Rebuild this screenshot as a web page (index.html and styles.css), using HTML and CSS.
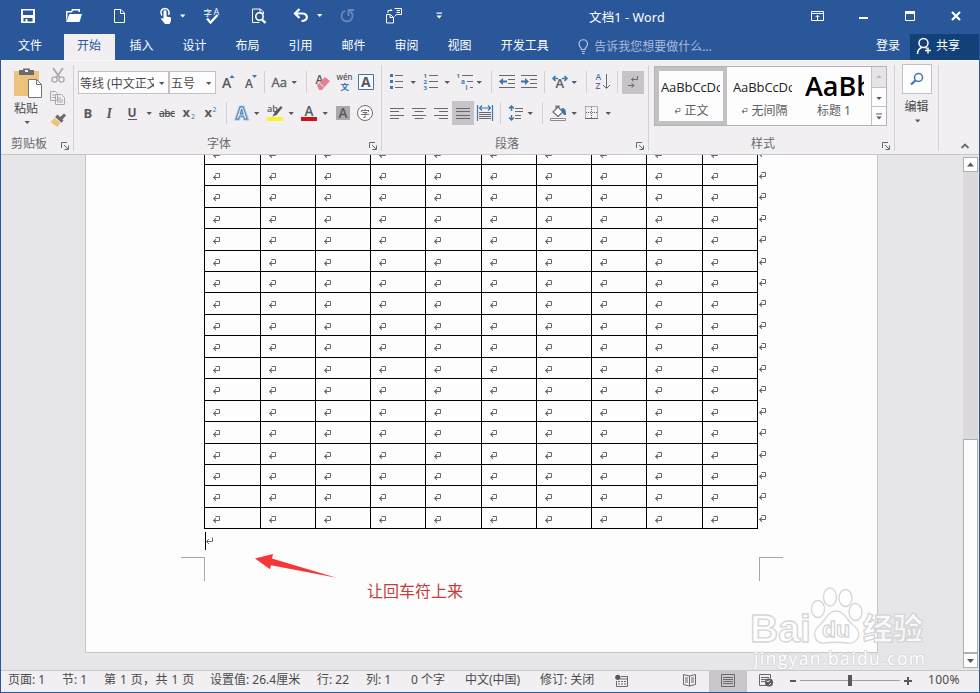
FILE: index.html
```html
<!DOCTYPE html>
<html lang="zh-CN">
<head>
    <meta charset="UTF-8">
    <title>文档1 - Word</title>
    <link rel="stylesheet" href="styles.css">
</head>
<body>
<svg class="defs">
    <defs>
        <path id="caret" d="M0 0h5.4l-2.7 3z"/>
        <path id="mark" d="M3.5 .5H7.500v4H1.5M4 2L1.300 4.500 4 7M3 3v3"/>
        <path id="launch" d="M.5 6V.5H6M3 3l4 4M7.5 3.5v4h-4"/>
    </defs>
</svg>
<div class="window">
    <div class="titlebar">
        <div class="quick">
            <svg width="50" height="34" viewBox="1 0 50 34"><path class="w" fill-rule="evenodd" d="M21 9h14v14H21zm2 1.5V15h10v-4.500zM23.500 18v3.500h2V19h2v2.500h5V18z"/></svg>
            <svg width="46" height="34" viewBox="51 0 46 34"><path class="w" d="M66 21V11h5l1-2h8v3h-1.500v-1.500H73L72 12.500h-4.500v4z"/><path class="w" d="M66 22l3.500-8H82l-2.500 8z"/></svg>
            <svg width="46" height="34" viewBox="97 0 46 34"><path class="wl" d="M114.500 9.500h6.500l3.500 3.500v9.500h-10zM120.500 9.500v4h4"/></svg>
            <svg width="50" height="34" viewBox="143 0 50 34"><path class="w" d="M163.500 11.500c0-1.800 3-1.800 3 0v5l4.500 1v3.500l-1.500 3H165l-4-5c0-1.200 1.500-1.500 2.500 0z"/><path class="wl" stroke-width="1.500" d="M162 15.500c-2.500-3-.5-7 3-7s5 3.500 3.500 6.500"/><use href="#caret" class="w" x="180" y="14.500"/></svg>
            <svg width="42" height="34" viewBox="193 0 42 34"><text class="w" x="203.500" y="16" font-size="8.500">字</text><text class="w" x="213.500" y="15" font-size="9">A</text><path d="M207 18.500l3.500 4 7-7.500" fill="none" stroke="#fff" stroke-width="2.400"/></svg>
            <svg width="46" height="34" viewBox="235 0 46 34"><path class="wl" d="M263.500 14v-2l-3-3h-8v13.500h7M260 9v4h3.500"/><circle cx="259.500" cy="16.500" r="3.700" fill="none" stroke="#fff" stroke-width="1.600"/><path d="M262 19.500l3.500 3.500" stroke="#fff" stroke-width="2.400"/></svg>
            <svg width="50" height="34" viewBox="281 0 50 34"><path d="M296 13.500h6.500c6 0 6 7.500-1 7.500" fill="none" stroke="#fff" stroke-width="2.200"/><path d="M299.500 9l-4.500 4.500 4.500 4.500" fill="none" stroke="#fff" stroke-width="2.200"/><use href="#caret" class="w" x="317" y="14"/></svg>
            <svg width="40" height="34" viewBox="331 0 40 34"><path d="M345 10.800a5.500 5.500 0 1 0 5 .5M348.500 16v-6h5.500" fill="none" stroke="#6a89bd" stroke-width="1.800"/></svg>
            <svg width="48" height="34" viewBox="371 0 48 34"><path class="wl" d="M386.500 14.500h4l3 3v5.500h-7zM390 14.500v3h3.500M394.500 8.500h7v6h-5l-2 2M396.500 10.500h3.500M396.500 12.500h3.500M388 13v-2.500h4l-1.500-1.500"/></svg>
            <svg width="34" height="34" viewBox="419 0 34 34"><path class="w" d="M436.500 12.500h5.500v1.200h-5.500z"/><use href="#caret" class="w" x="436.500" y="15.500"/></svg>
        </div>
        <div class="title">文档1 - Word</div>
        <div class="controls">
            <svg width="46" height="34" viewBox="795 0 46 34"><path class="wl" d="M811.500 11.500h12v9h-12zM811.500 13.500h12M817.500 20v-4.500M815.500 17.200l2-2 2 2"/></svg>
            <svg width="46" height="34" viewBox="841 0 46 34"><path class="w" d="M859 17h9v2h-9z"/></svg>
            <svg width="46" height="34" viewBox="887 0 46 34"><path class="wl" d="M905.500 11.500h9v9h-9z"/><path class="w" d="M905 11h10v3h-10z"/></svg>
            <svg width="46" height="34" viewBox="933 0 46 34"><path d="M952 12l8 8M960 12l-8 8" stroke="#fff" stroke-width="2.200"/></svg>
        </div>
    </div>

    <div class="tabs">
        <span class="tab file">文件</span>
        <span class="tab active">开始</span>
        <span class="tab">插入</span>
        <span class="tab">设计</span>
        <span class="tab">布局</span>
        <span class="tab">引用</span>
        <span class="tab">邮件</span>
        <span class="tab">审阅</span>
        <span class="tab">视图</span>
        <span class="tab">开发工具</span>
        <span class="tell">
            <svg width="11" height="16" viewBox="0 0 11 16"><path d="M3.500 10.500C3.500 8.500 1 8 1 5a4.200 4.200 0 0 1 8.500 0c0 3-2.500 3.500-2.500 5.500zM3.500 12.500H7M4 14.500h2.500" fill="none" stroke="#b4c5e2" stroke-width="1.200"/></svg>
            告诉我您想要做什么...
        </span>
        <span class="login">登录</span>
        <span class="share">
            <svg width="17" height="18" viewBox="0 0 17 18"><circle cx="7.500" cy="6" r="4.500" fill="none" stroke="#fff" stroke-width="1.500"/><path d="M1.500 17c0-4 2-5.500 4-6.500M9.500 10.500l1.500 1M12 10.500v6M9 13.500h6" fill="none" stroke="#fff" stroke-width="1.500"/></svg>
            共享
        </span>
    </div>

    <div class="ribbon">
        <div class="group clipboard">
            <div class="clip-body">
                <div class="paste">
                    <svg width="34" height="34" viewBox="9 66 34 34"><path fill="#ecc37d" d="M14 71h25v25H14z"/><path fill="#6b6a6d" d="M19 75v-5h4v-1.500h7V70h4v5z"/><path fill="#f1eff2" d="M25 70h3v2h-3z"/><path d="M28.500 79.500h8l5 5v13h-13z" fill="#fff" stroke="#77757a"/><path d="M36.500 79.500v5h5" fill="none" stroke="#77757a"/></svg>
                    <span>粘贴</span>
                    <svg width="10" height="8"><use href="#caret" class="g" x="3.500" y="4"/></svg>
                </div>
                <div class="clip-tools">
                    <svg width="20" height="22" viewBox="48 64 20 22"><path d="M53 67l7 10M63 67l-7 10" stroke="#aaa8ad" stroke-width="1.800"/><circle cx="54.500" cy="78.500" r="2.600" fill="none" stroke="#aaa8ad" stroke-width="1.300"/><circle cx="61.500" cy="78.500" r="2.600" fill="none" stroke="#aaa8ad" stroke-width="1.300"/></svg>
                    <svg width="20" height="22" viewBox="48 86 20 22"><path d="M50.500 90.500h5l2 2v7h-7zM55.500 93.500h6l3 3v7h-9z" fill="#f1eff2" stroke="#aaa8ad"/><path d="M52 94h3M52 96.500h3M57 97h4M57 99h6M57 101h6" stroke="#aaa8ad"/></svg>
                    <svg width="20" height="22" viewBox="48 108 20 22"><path fill="#ecc37d" d="M50.500 121l4-4 6 5-3.500 4z"/><path fill="#6b6a6d" d="M55 116l2.500-2.500 6 6-2 2.200zM60 116l4-3.500 2 2-3.500 4z"/></svg>
                </div>
            </div>
            <div class="label">剪贴板<svg width="9" height="9"><use href="#launch" class="gl"/></svg></div>
        </div>

        <div class="group font">
            <div class="row">
                <div class="combo name"><span>等线 (中文正文)</span><svg width="12" height="8"><use href="#caret" class="g" x="3" y="3"/></svg></div>
                <div class="combo size"><span>五号</span><svg width="12" height="8"><use href="#caret" class="g" x="3" y="3"/></svg></div>
                <svg width="26" height="24" viewBox="216 70 26 24"><text class="g b2" x="222" y="88" font-size="14">A</text><path class="bl" d="M229.500 78l2.500-3 2.500 3z"/></svg>
                <svg width="22" height="24" viewBox="242 70 22 24"><text class="g b2" x="245" y="88" font-size="12">A</text><path class="bl" d="M252 75h5l-2.500 3z"/></svg>
                <i class="sep"></i>
                <svg width="41" height="24" viewBox="265 70 41 24"><text class="g" stroke="#59585b" stroke-width=".3" x="271.500" y="87" font-size="13">Aa</text><use href="#caret" class="g" x="291.500" y="81"/></svg>
                <i class="sep"></i>
                <svg width="26" height="24" viewBox="307 70 26 24"><text class="g b2" x="315.500" y="84" font-size="12">A</text><path d="M317 85l8-8 5 4-8 9h-3z" fill="#e58291"/><path d="M319 82.500l5 5" stroke="#f1eff2"/></svg>
                <svg width="23" height="24" viewBox="333 70 23 24"><text class="g b2" x="336.500" y="80" font-size="8.500" textLength="16" lengthAdjust="spacingAndGlyphs">wén</text><text fill="#3b77ad" x="340.500" y="90" font-size="8.500" font-weight="bold">文</text></svg>
                <svg width="22" height="24" viewBox="356 70 22 24"><path d="M358.500 74.500h15v15h-15z" fill="#f8fafc" stroke="#3b77ad"/><text class="g b" x="361" y="87" font-size="14">A</text></svg>
            </div>
            <div class="row">
                <svg width="20" height="24" viewBox="78 101 20 24"><text class="g b" x="83.500" y="117.500" font-size="13">B</text></svg>
                <svg width="22" height="24" viewBox="98 101 22 24"><text class="g" x="106.500" y="117.500" font-size="14" font-style="italic" font-family="Liberation Serif" font-weight="bold">I</text></svg>
                <svg width="36" height="24" viewBox="120 101 36 24"><text class="g b" x="127.500" y="117" font-size="12">U</text><path class="g" d="M128 119h9v1h-9z"/><use href="#caret" class="g" x="146.500" y="112"/></svg>
                <svg width="24" height="24" viewBox="156 101 24 24"><text class="g b2" x="159" y="117" font-size="10" textLength="16">abc</text><path class="g" d="M159 113h16v1h-16z"/></svg>
                <svg width="20" height="24" viewBox="180 101 20 24"><text class="g b" x="182.500" y="117" font-size="13">x</text><text fill="#3b77ad" x="191" y="119" font-size="7">2</text></svg>
                <svg width="26" height="24" viewBox="200 101 26 24"><text class="g b" x="204.500" y="117" font-size="13">x</text><text fill="#3b77ad" x="212.500" y="112" font-size="7">2</text></svg>
                <i class="sep"></i>
                <svg width="35" height="24" viewBox="227 101 35 24"><text x="236" y="119" font-size="16" font-weight="bold" fill="#fff" stroke="#a9cbe6" stroke-width="3">A</text><text x="236" y="119" font-size="16" font-weight="bold" fill="#fff" stroke="#3b77ad" stroke-width=".9">A</text><use href="#caret" class="g" x="254" y="112"/></svg>
                <svg width="35" height="24" viewBox="262 101 35 24"><text class="g b2" x="267" y="112" font-size="9">ab</text><path fill="#f9f32a" d="M267 117h16v4h-16z"/><path class="g" d="M281 106l1.500 1.500-6 7.500-4 1.500 2-4z"/><use href="#caret" class="g" x="288.500" y="112"/></svg>
                <svg width="35" height="24" viewBox="297 101 35 24"><text class="g b2" x="304.500" y="116" font-size="13.500">A</text><path fill="#d0121b" d="M301 117h16v4h-16z"/><use href="#caret" class="g" x="322.500" y="112"/></svg>
                <svg width="22" height="24" viewBox="332 101 22 24"><path fill="#aba9ad" d="M336 106h14v14h-14z"/><text class="g b2" x="338.500" y="118" font-size="13.500">A</text></svg>
                <svg width="24" height="24" viewBox="354 101 24 24"><circle cx="365" cy="113" r="7.500" fill="#fff" stroke="#6b6a6d"/><text class="g" x="360.300" y="116.500" font-size="9.500">字</text></svg>
            </div>
            <div class="label">字体<svg width="9" height="9"><use href="#launch" class="gl"/></svg></div>
        </div>

        <div class="group para">
            <div class="row">
                <svg width="34" height="24" viewBox="385 70 34 24"><path class="bl" d="M390 74h3v3h-3zM390 80h3v3h-3zM390 86h3v3h-3z"/><path class="gl" d="M395 75.500h8M395 81.500h8M395 87.500h8"/><use href="#caret" class="g" x="410.500" y="81"/></svg>
                <svg width="34" height="24" viewBox="419 70 34 24"><text class="bl b" x="423.500" y="78" font-size="6">1</text><text class="bl b" x="423.500" y="84" font-size="6">2</text><text class="bl b" x="423.500" y="90" font-size="6">3</text><path class="gl" d="M429 75.500h9M429 81.500h9M429 87.500h9"/><use href="#caret" class="g" x="444.500" y="81"/></svg>
                <svg width="38" height="24" viewBox="453 70 38 24"><text class="bl b" x="456.500" y="78" font-size="6">1</text><text class="bl b" x="461" y="84" font-size="6.500">a</text><text class="bl b" x="465.500" y="90" font-size="6.500">i</text><path class="gl" d="M462 75.500h11M467 81.500h6M470 87.500h3"/><use href="#caret" class="g" x="476.500" y="81"/></svg>
                <i class="sep"></i>
                <svg width="26" height="24" viewBox="492 70 26 24"><path class="gl" d="M499 75.500h16M508 79.500h7M508 83.500h7M499 87.500h16"/><path class="bl" d="M499 81.500l4-3.500v2.500h4v2h-4V85z"/></svg>
                <svg width="26" height="24" viewBox="518 70 26 24"><path class="gl" d="M521 75.500h16M530 79.500h7M530 83.500h7M521 87.500h16"/><path class="bl" d="M529 81.500l-4-3.500v2.500h-4v2h4V85z"/></svg>
                <i class="sep"></i>
                <svg width="41" height="24" viewBox="545 70 41 24"><text class="g b2" x="555.500" y="88" font-size="13">A</text><path d="M558 78.500h-5M555.500 76l-2.500 2.500 2.500 2.500M562 78.500h5M564.500 76l2.500 2.500-2.500 2.500" fill="none" stroke="#3b77ad" stroke-width="1.500"/><use href="#caret" class="g" x="571.500" y="81"/></svg>
                <i class="sep"></i>
                <svg width="30" height="24" viewBox="587 70 30 24"><text class="bl b2" x="595.500" y="80" font-size="8.500">A</text><text fill="#8b4fa8" class="b2" x="595.500" y="89" font-size="8.500">Z</text><path class="gl" d="M606.500 74v14M603 85l3.500 3.500L610 85"/></svg>
                <i class="sep"></i>
                <svg width="27" height="24" viewBox="618 70 27 24"><path fill="#c6c4c7" d="M622 71h22v23h-22z"/><path class="gl" d="M637.500 76v3.500h-6M633.500 77.500l-2 2 2 2M628 85.500h6M631.500 83l2.500 2.500-2.500 2.500"/></svg>
            </div>
            <div class="row">
                <svg width="23" height="24" viewBox="385 101 23 24"><path class="gl" d="M390 108.500h14M390 111.500h9M390 115.500h14M390 118.500h9"/></svg>
                <svg width="22" height="24" viewBox="408 101 22 24"><path class="gl" d="M412 108.500h14M414.500 111.500h9M412 115.500h14M414.500 118.500h9"/></svg>
                <svg width="22" height="24" viewBox="430 101 22 24"><path class="gl" d="M434 108.500h14M439 111.500h9M434 115.500h14M439 118.500h9"/></svg>
                <svg width="22" height="24" viewBox="452 101 22 24"><path fill="#c6c4c7" d="M452 101h22v24h-22z"/><path class="gl" d="M456 108.500h14M456 111.500h14M456 115.500h14M456 118.500h14"/></svg>
                <svg width="26" height="24" viewBox="474 101 26 24"><path d="M477.500 105v16M492.500 105v16M479.500 108h11M482 105.500l-2.500 2.500 2.500 2.500M488 105.500l2.500 2.500-2.500 2.500" fill="none" stroke="#3b77ad" stroke-width="1.200"/><path class="gl" d="M479 112.500h12M479 114.500h12M479 116.500h12M479 118.500h12"/></svg>
                <i class="sep"></i>
                <svg width="41" height="24" viewBox="501 101 41 24"><path d="M511.500 106v5M511.500 115v5M509 108.500l2.500-2.500 2.500 2.500M509 117.500l2.500 2.500 2.500-2.500" fill="none" stroke="#3b77ad" stroke-width="1.500"/><path class="gl" d="M515 108.500h8M515 111.500h8M515 115.500h6M515 118.500h6"/><use href="#caret" class="g" x="527.500" y="112"/></svg>
                <i class="sep"></i>
                <svg width="38" height="24" viewBox="543 101 38 24"><path d="M553 112l5-5 5 5-5 4.500zM556 109v-3h3v3" fill="#fff" stroke="#6b6a6d" stroke-width="1.200"/><path class="bl" d="M562 108c3 0 4 2 4 7h-2l-3-5z"/><path d="M550.500 118.500h15v2h-15z" fill="#fff" stroke="#8b8a8d"/><use href="#caret" class="g" x="571.500" y="112"/></svg>
                <svg width="36" height="24" viewBox="581 101 36 24"><path d="M585.500 106.500h12v12M585.500 106.500v12M591.500 107v11M586 112.500h12" class="gl" stroke-dasharray="1 1"/><path class="gl" d="M585 118.500h13"/><use href="#caret" class="g" x="605.500" y="112"/></svg>
            </div>
            <div class="label">段落<svg width="9" height="9"><use href="#launch" class="gl"/></svg></div>
        </div>

        <div class="group styles">
            <div class="gallery">
                <div class="style current"><b>AaBbCcDc</b><span><svg width="9" height="9"><use href="#mark" class="gl"/></svg>正文</span></div>
                <div class="style"><b>AaBbCcDc</b><span><svg width="9" height="9"><use href="#mark" class="gl"/></svg>无间隔</span></div>
                <div class="style heading"><b>AaBb</b><span>标题 1</span></div>
                <div class="scroller">
                    <svg width="14" height="20"><path d="M4 11h6L7 8z" fill="#bbb9bd"/></svg>
                    <svg width="14" height="19"><use href="#caret" class="g" x="4.300" y="9"/></svg>
                    <svg width="14" height="18"><path class="g" d="M4 6.500h6v1H4z"/><use href="#caret" class="g" x="4.300" y="9.500"/></svg>
                </div>
            </div>
            <div class="label">样式<svg width="9" height="9"><use href="#launch" class="gl"/></svg></div>
        </div>

        <div class="group edit">
            <div class="find"><svg width="16" height="16"><circle cx="9.500" cy="5.500" r="4" fill="none" stroke="#3b77ad" stroke-width="1.500"/><path d="M6.500 8.500l-4.500 4" stroke="#3b77ad" stroke-width="2.200"/></svg></div>
            <span>编辑</span>
            <svg width="10" height="9"><use href="#caret" class="g" x="3" y="3.500"/></svg>
        </div>
        <svg class="collapse" width="10" height="8"><path d="M1.500 6L5 2.500 8.500 6" fill="none" stroke="#6b6a6d" stroke-width="1.800"/></svg>
    </div>

    <div class="workspace">
        <div class="page">
            <div class="sheet" id="sheet"></div>
            <div class="after"><i class="cursor"></i><svg width="9" height="9"><path class="gl" d="M6.500 .5v4H1M3 2L.5 4.500 3 7"/></svg></div>
            <div class="corners"><i class="corner left"></i><i class="corner right"></i></div>
            <svg class="arrow" width="84" height="28" viewBox="254 552 84 28"><path fill="#f73737" d="M255 558.500l18-4.500-1 4.500 64.500 19.200L271 565.200l-1 4z"/></svg>
            <div class="note">让回车符上来</div>
        </div>
        <div class="scrollbar">
            <div class="btn"><svg width="13" height="13"><path class="g" d="M3 8.500h7l-3.500-4z"/></svg></div>
            <div class="track"></div>
            <div class="thumb"></div>
            <div class="btn"><svg width="13" height="13"><path class="g" d="M3 5h7L6.500 9z"/></svg></div>
        </div>
        <svg class="watermark" width="190" height="90" viewBox="745 584 190 90">
            <g fill="#fff" fill-opacity=".8" stroke="#d6d5d8" stroke-width="1.300">
                <ellipse cx="818" cy="609" rx="6.500" ry="8.500"/>
                <ellipse cx="830" cy="597" rx="6.500" ry="9"/>
                <ellipse cx="845.500" cy="598" rx="6.500" ry="8.500"/>
                <ellipse cx="855.500" cy="612" rx="6.500" ry="8.500"/>
                <path d="M836 611c8 0 10 8 16 13 12 9 6 20-4 19-8-1-16-1-23 0-11 1-14-11-5-18 6-5 8-14 16-14z"/>
                <text class="logo" x="750" y="642" font-size="38" textLength="61" lengthAdjust="spacingAndGlyphs">Bai</text>
                <text class="logo" x="822" y="637" font-size="22" textLength="28" lengthAdjust="spacingAndGlyphs">du</text>
                <text x="863" y="639" font-size="30" font-weight="900">经验</text>
            </g>
            <text x="754" y="665" font-size="17.500" fill="#fff" stroke="#d6d5d8" stroke-width="1.600" paint-order="stroke" textLength="171">jingyan.baidu.com</text>
        </svg>
    </div>

    <div class="status">
        <span>页面: 1</span><span>节: 1</span><span class="pages">第 1 页，共 1 页</span><span>设置值: 26.4厘米</span><span>行: 22</span><span>列: 1</span><span>0 个字</span><span>中文(中国)</span><span>修订: 关闭</span>
        <svg width="16" height="16"><circle cx="2.800" cy="3.300" r="2.600" class="g"/><path class="gl" d="M6 2.500h6.500v10h-11V7M5 5h8"/><path d="M3 7.500h9M3 10h9" class="gl" stroke-dasharray="2 1"/></svg>
        <svg width="26" height="21" viewBox="683 671 26 21"><path class="gl" d="M689.500 676l-6-1.500v10l6 1.500 6-1.500v-10l-6 1.500v10M685 678h3M685 680h3M685 682h3M691 678h3M691 680h3M691 682h3"/></svg>
        <svg class="on" width="38" height="21" viewBox="709 671 38 21"><path class="gl" d="M721.500 674.500h13v12h-13zM723 677.500h10M723 679.500h10M723 681.500h10M723 683.500h10"/></svg>
        <svg width="43" height="21" viewBox="747 671 43 21"><path class="gl" d="M766 685.500h-6.500v-11h11v4M761 677.500h8M761 679.500h5M761 681.500h4"/><circle cx="769" cy="682.500" r="4" class="g"/><path d="M766.500 681l2 1 1-2M769 685l2-2" stroke="#f1eff2" fill="none"/></svg>
        <svg width="138" height="21" viewBox="790 671 138 21"><path class="g" d="M790 680h6v2h-6zM904 680h8v2h-8zM907 677h2v8h-2z"/><path class="gl" stroke-opacity=".6" d="M800 680.500h100"/><path class="g" d="M848 675h4v11h-4z"/></svg>
        <span class="zoom">100%</span>
    </div>
</div>
<script>
    // 17 visible rows plus the one cut off by the ribbon, last column is the row-end mark
    let sheet = document.getElementById("sheet");
    let mark = '<svg width="9" height="9"><use href="#mark" class="gl"/></svg>';
    for (let r = 0; r < 18; r++) {
        for (let c = 0; c < 11; c++) {
            let cell = document.createElement("div");
            cell.className = c < 10 ? "cell" : "cell end";
            cell.innerHTML = mark;
            sheet.appendChild(cell);
        }
    }
</script>
</body>
</html>
```
FILE: styles.css
```css
* {
    box-sizing: border-box;
}
body {
    margin: 0;
    font-family: "Noto Sans", "Noto Sans CJK SC", sans-serif;
    font-size: 12px;
    color: #4a494c;
}
svg {
    display: block;
    flex: none;
    font-family: "Open Sans", "Noto Sans CJK SC", sans-serif;
}
.defs {
    width: 0;
    height: 0;
    position: absolute;
}
.w { fill: #fff; }
.wl { fill: none; stroke: #fff; }
.g { fill: #59585b; }
.gl { fill: none; stroke: #69686b; }
.bl { fill: #3b77ad; }
.b { font-weight: bold; }
.b2 { font-weight: 600; }

.window {
    width: 980px;
    height: 693px;
    display: flex;
    flex-direction: column;
    overflow: hidden;
    border: 1px solid #2a579a;
    border-top: 0;
    background: #e6e5e8;
}

/* title bar */
.titlebar {
    height: 34px;
    display: flex;
    background: #2a579a;
    color: #fff;
}
.quick {
    display: flex;
    width: 588px;
}
.title {
    flex: 1;
    font-size: 12.5px;
    line-height: 35px;
    letter-spacing: .15px;
    white-space: nowrap;
}
.controls {
    display: flex;
}

/* tabs */
.tabs {
    height: 26px;
    display: flex;
    background: #2a579a;
    color: #fff;
    line-height: 24px;
}
.tab {
    padding: 0 14.5px;
}
.tab.file {
    padding: 0 22px 0 17px;
}
.tab.active {
    width: 51px;
    padding: 0 13px;
    background: #f1eff2;
    color: #2a579a;
}
.tell {
    display: flex;
    align-items: center;
    gap: 5px;
    padding-left: 15px;
    color: #a9bbdb;
    white-space: nowrap;
}
.login {
    margin-left: auto;
    padding-right: 10px;
}
.share {
    width: 69px;
    display: flex;
    gap: 3px;
    padding-left: 6px;
    background: #124078;
}
.share svg {
    margin-top: 3px;
}

/* ribbon */
.ribbon {
    height: 95px;
    flex: none;
    display: flex;
    background: #f1eff2;
    border-bottom: 1px solid #c8c6c9;
    border-top: 1px solid #f5f8fd;
}
.group {
    display: flex;
    flex-direction: column;
    position: relative;
    padding-top: 9px;
}
.group::after {
    content: '';
    position: absolute;
    right: 0;
    top: 4px;
    height: 86px;
    width: 1px;
    background: #d2d0d4;
}
.row {
    display: flex;
    height: 24px;
    margin-bottom: 7px;
}
.sep {
    width: 1px;
    height: 22px;
    margin-top: 1px;
    background: #d2d0d4;
}
.label {
    display: flex;
    justify-content: center;
    height: 17px;
    margin-top: auto;
    margin-bottom: 1px;
    line-height: 16px;
    color: #6a696c;
}
.label svg {
    position: absolute;
    right: 4px;
    bottom: 3px;
}
.clipboard {
    width: 73px;
    padding-top: 5px;
}
.clipboard .label {
    padding-right: 17px;
}
.clip-body {
    display: flex;
    padding-left: 8px;
}
.paste {
    display: flex;
    flex-direction: column;
    align-items: center;
    width: 34px;
    line-height: 17px;
}
.clip-tools {
    padding-left: 5px;
}
.clip-tools svg {
    margin-top: -1px;
    margin-bottom: 1px;
}
.font {
    width: 308px;
    padding-left: 4px;
}
.font .label {
    padding-right: 22px;
}
.combo {
    height: 23px;
    margin-top: 1px;
    display: flex;
    align-items: center;
    justify-content: space-between;
    background: #fdfdfd;
    border: 1px solid #c3c1c5;
}
.combo span {
    overflow: hidden;
    white-space: nowrap;
    padding-left: 1px;
}
.combo.name {
    width: 91px;
}
.combo.name span {
    width: 75px;
}
.combo.size {
    width: 47px;
}
.para {
    width: 267px;
    padding-left: 3px;
}
.para .label {
    padding-right: 20px;
}
.styles {
    width: 246px;
    padding: 5px 0 0 5px;
}
.styles .label {
    padding-right: 23px;
}
.gallery {
    display: flex;
    width: 233px;
    height: 60px;
    background: #fdfdfd;
    border: 1px solid #b5b3b7;
}
.style {
    width: 72px;
    padding: 4px 4px 4px 6px;
    text-align: center;
}
.style.current {
    border: 4px solid #c2c0c3;
    padding: 0 2px;
}
.style b {
    display: block;
    height: 31px;
    width: 59px;
    overflow: hidden;
    font: 13px/33px "Open Sans";
    letter-spacing: -.1px;
    text-align: left;
    white-space: nowrap;
    color: #222;
}
.style.heading b {
    font: 600 27px/29px "Open Sans";
    letter-spacing: 0;
    color: #000;
}
.style.heading span {
    padding-right: 4px;
}
.style span {
    display: flex;
    justify-content: center;
    align-items: center;
    gap: 2px;
    line-height: 18px;
    color: #5d5c5f;
}
.style span svg {
    transform: scale(.8);
}
.scroller {
    width: 15px;
    margin-left: auto;
    border-left: 1px solid #c3c1c5;
}
.scroller svg + svg {
    border-top: 1px solid #c3c1c5;
}
.scroller svg:first-child {
    background: #e6e4e8;
}
.edit {
    width: 44px;
    padding-top: 3px;
    padding-right: 1px;
    align-items: center;
}
.edit span {
    margin-top: 4px;
    line-height: 18px;
}
.find {
    width: 30px;
    height: 30px;
    padding: 7px 6px;
    background: #fdfdfd;
    border: 1px solid #c3c1c5;
}
.collapse {
    align-self: flex-end;
    margin: 0 9px 4px auto;
}

/* document */
.workspace {
    height: 515px;
    flex: none;
    display: flex;
    justify-content: space-between;
    position: relative;
    overflow: hidden;
}
.page {
    width: 793px;
    height: 498px;
    margin-left: 84px;
    background: #fdfdfd;
    border: 1px solid #c8c6c9;
    border-top: 0;
    position: relative;
    overflow: hidden;
}
.sheet {
    width: 565px;
    margin-left: 118.35px;
    margin-top: -11.6px;
    display: grid;
    grid-template-columns: repeat(10, 55.28px) 12px;
    grid-auto-rows: 21.44px;
}
.cell {
    border-left: 1px solid #000;
    border-bottom: 1px solid #000;
    padding: 8px 0 0 7px;
}
.cell.end {
    border-bottom: 0;
    padding: 7px 0 0 0;
}
.after {
    display: flex;
    margin: 3px 0 0 119px;
    height: 18px;
}
.after svg {
    margin-top: 5px;
}
.cursor {
    width: 1px;
    background: #000;
}
.corners {
    display: flex;
    justify-content: space-between;
    width: 602px;
    margin: 7px 0 0 95px;
}
.corner {
    width: 24px;
    height: 24px;
    border-top: 1px solid #a5a4a7;
}
.corner.left {
    border-right: 1px solid #a5a4a7;
}
.corner.right {
    border-left: 1px solid #a5a4a7;
}
/* annotation on top of the page */
.arrow {
    position: absolute;
    left: 168px;
    top: 397px;
}
.note {
    position: absolute;
    left: 281px;
    top: 424px;
    font-size: 16px;
    line-height: 24px;
    color: #c0403f;
}
.scrollbar {
    width: 15px;
    margin-right: 1px;
    padding: 2px 0;
    display: flex;
    flex-direction: column;
}
.btn {
    height: 15px;
    background: #fdfdfd;
    border: 1px solid #b0aeb2;
}
.track {
    height: 267px;
    background: #dbd9dc;
}
.thumb {
    height: 214px;
    background: #fdfdfd;
    border: 1px solid #b0aeb2;
}
.watermark {
    position: absolute;
    left: 744px;
    top: 429px;
}
.logo {
    font-family: "Liberation Sans", sans-serif;
    font-weight: bold;
}

/* status bar */
.status {
    flex: 1;
    display: grid;
    grid-template-columns: 54px 42px 106px 107px 49px 45px 54px 75px 75px 68px 26px 38px 43px 138px 50px;
    padding-left: 7px;
    background: #f1eff2;
    border-top: 1px solid #c8c6c9;
    line-height: 18px;
    white-space: nowrap;
}
.status .pages {
    letter-spacing: .4px;
}
.status .zoom {
    letter-spacing: .3px;
}
.status > svg:first-of-type {
    margin-top: 3px;
}
.status .on {
    background: #c9c7ca;
}
```
